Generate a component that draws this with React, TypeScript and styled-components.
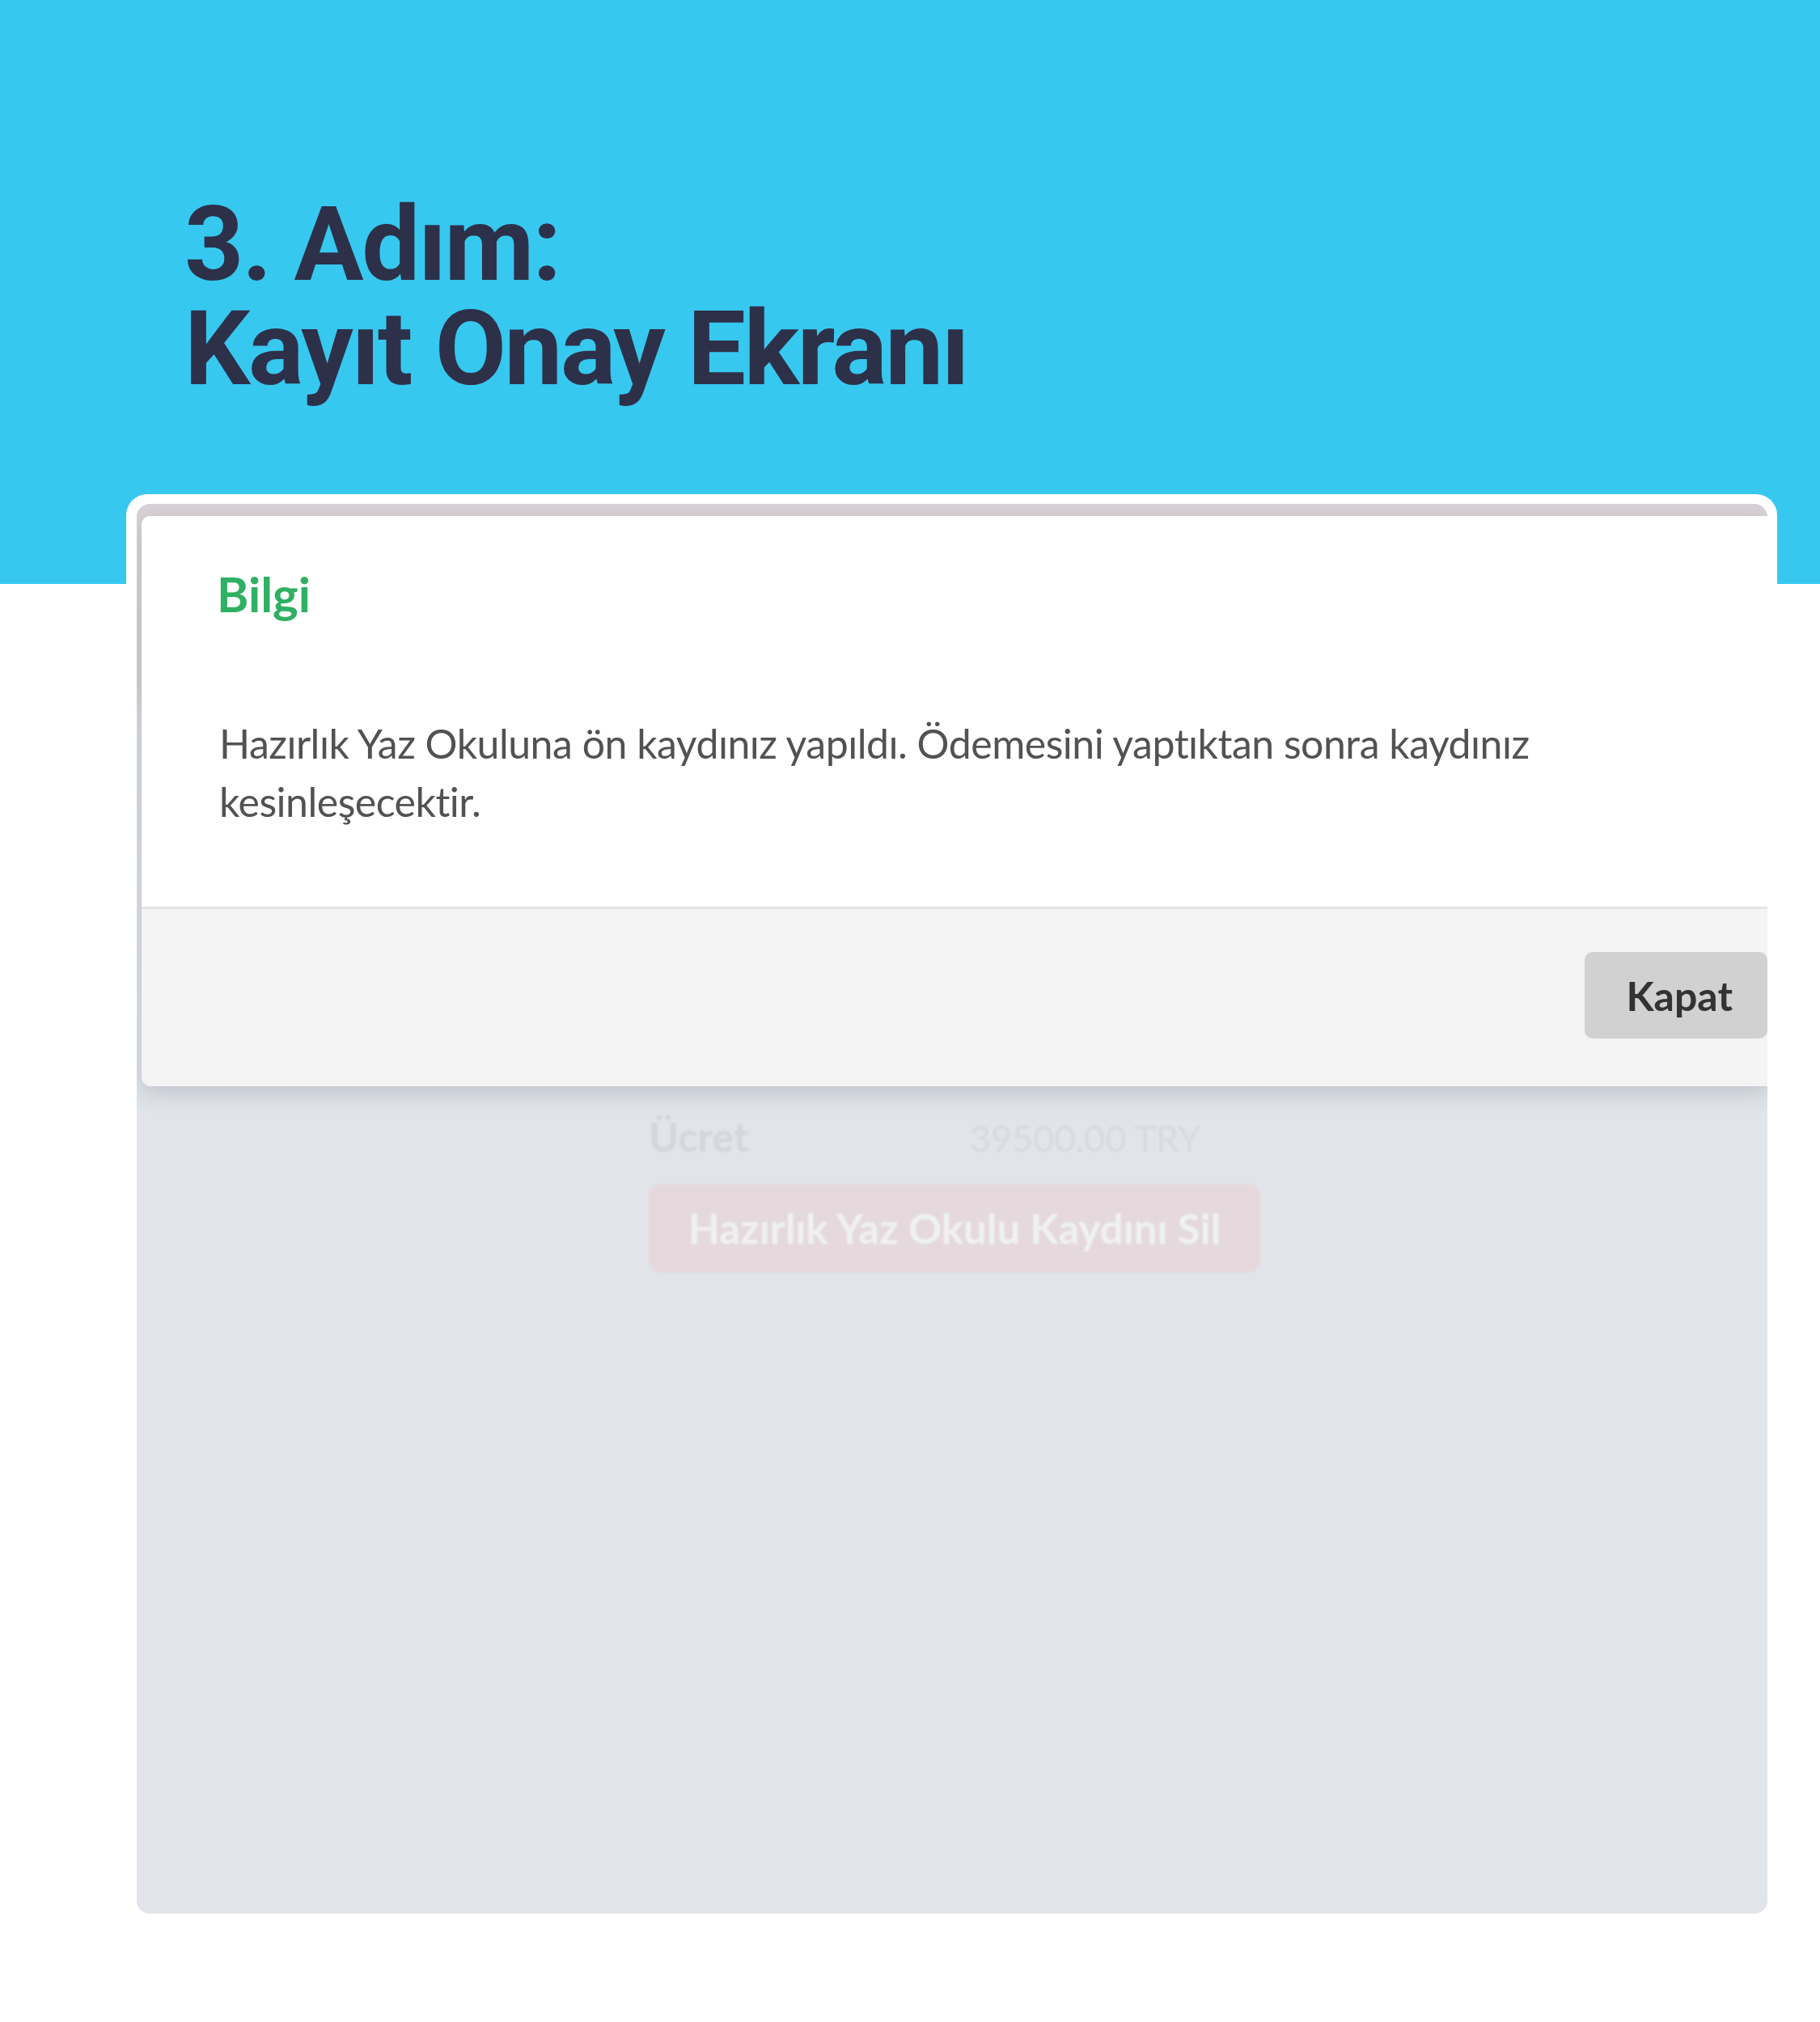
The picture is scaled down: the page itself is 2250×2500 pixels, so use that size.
import React from "react";
import styled, { createGlobalStyle } from "styled-components";

const GlobalStyle = createGlobalStyle`
  html, body {
    margin: 0;
    padding: 0;
    background: #ffffff;
  }
  body {
    width: 2250px;
    min-height: 2500px;
    font-family: "Lato", "Open Sans", sans-serif;
  }
`;

const Page = styled.main`
  width: 2250px;
  min-height: 2500px;
  background: #ffffff;
`;

const Hero = styled.header`
  height: 722px;
  box-sizing: border-box;
  padding: 238px 0 0 228px;
  background: #37c8f0;
`;

const Title = styled.h1`
  margin: 0;
  font-family: "Roboto", "Inter", sans-serif;
  font-weight: 700;
  font-size: 128px;
  line-height: 129px;
  letter-spacing: -2.3px;
  color: #2d3049;
`;

const TitleLine = styled.span`
  display: block;
`;

const Stage = styled.section`
  position: relative;
  margin-top: -111px;
  padding: 0 53px 0 156px;
`;

const Frame = styled.div`
  background: #ffffff;
  border-radius: 26px;
  padding: 12px 12px 0 13px;
`;

const Screen = styled.div`
  height: 1743px;
  border-radius: 16px;
  overflow: hidden;
  background: linear-gradient(
    to bottom,
    #d9d2d6 0,
    #d6d0d4 220px,
    #d9dce1 280px,
    #e1e4e9 760px,
    #e1e4e9 100%
  );
`;

const Dialog = styled.div`
  margin: 15px 0 0 6px;
  background: #ffffff;
  border-radius: 10px 0 0 12px;
  box-shadow: 0 8px 26px rgba(70, 80, 100, 0.22);
  overflow: hidden;
`;

const DialogHeader = styled.div`
  padding: 63px 95px 0 93px;
`;

const DialogTitle = styled.h4`
  margin: 0;
  font-family: "Lato", sans-serif;
  font-weight: 700;
  font-size: 60px;
  line-height: 66px;
  color: #2fb062;
`;

const DialogBody = styled.p`
  margin: 0;
  padding: 116px 95px 94px 96px;
  font-family: "Lato", sans-serif;
  font-weight: 400;
  font-size: 50px;
  line-height: 72px;
  letter-spacing: -0.5px;
  color: #525252;
  max-width: 1740px;
`;

const DialogFooter = styled.div`
  display: flex;
  justify-content: flex-end;
  padding: 53px 0 59px;
  background: #f4f4f4;
  border-top: 3px solid #e4e4e4;
`;

const Button = styled.button<{ $tone: "neutral" | "danger" }>`
  display: inline-flex;
  align-items: center;
  border: 0;
  font-family: "Lato", sans-serif;
  font-weight: 700;
  font-size: 50px;
  cursor: pointer;
  ${({ $tone }) =>
    $tone === "neutral"
      ? `
    height: 107px;
    padding: 0 43px 0 51px;
    border-radius: 10px;
    background: #d1d1d1;
    color: #333333;
  `
      : `
    height: 109px;
    width: 756px;
    justify-content: center;
    border-radius: 14px;
    background: #e5d9dd;
    color: #eff1f3;
    font-size: 51px;
  `}
`;

const Backdrop = styled.div`
  padding: 32px 0 0 633px;
  filter: blur(1.2px);
`;

const InfoRow = styled.div`
  display: grid;
  grid-template-columns: 397px auto;
  align-items: baseline;
  font-family: "Lato", sans-serif;
  line-height: 60px;
  color: #d3d6dc;
`;

const InfoLabel = styled.span`
  font-weight: 700;
  font-size: 50px;
`;

const InfoValue = styled.span`
  font-weight: 400;
  font-size: 45px;
  color: #d7dadf;
`;

const Actions = styled.div`
  margin-top: 27px;
`;

export default function App() {
  return (
    <>
      <GlobalStyle />
      <Page>
        <Hero>
          <Title>
            <TitleLine>3. Adım:</TitleLine>
            <TitleLine>Kayıt Onay Ekranı</TitleLine>
          </Title>
        </Hero>
        <Stage>
          <Frame>
            <Screen>
              <Dialog>
                <DialogHeader>
                  <DialogTitle>Bilgi</DialogTitle>
                </DialogHeader>
                <DialogBody>
                  Hazırlık Yaz Okuluna ön kaydınız yapıldı. Ödemesini yaptıktan
                  sonra kaydınız kesinleşecektir.
                </DialogBody>
                <DialogFooter>
                  <Button $tone="neutral">Kapat</Button>
                </DialogFooter>
              </Dialog>
              <Backdrop>
                <InfoRow>
                  <InfoLabel>Ücret</InfoLabel>
                  <InfoValue>39500.00 TRY</InfoValue>
                </InfoRow>
                <Actions>
                  <Button $tone="danger">Hazırlık Yaz Okulu Kaydını Sil</Button>
                </Actions>
              </Backdrop>
            </Screen>
          </Frame>
        </Stage>
      </Page>
    </>
  );
}
